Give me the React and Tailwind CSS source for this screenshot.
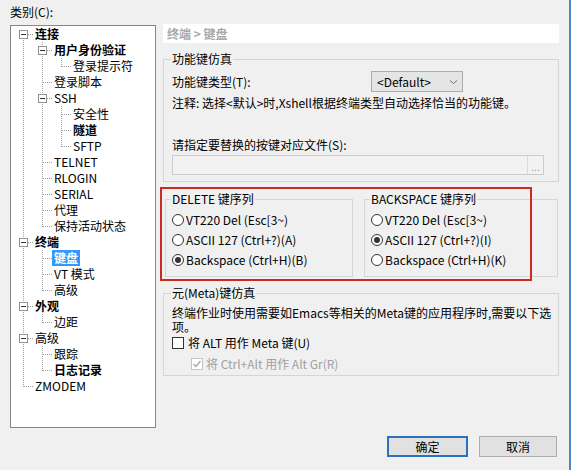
import React from 'react'

// tree rows: [label, level, bold, expander]
const TREE = [
  ['连接', 0, true, true],
  ['用户身份验证', 1, true, true],
  ['登录提示符', 2, false, false],
  ['登录脚本', 1, false, false],
  ['SSH', 1, false, true],
  ['安全性', 2, false, false],
  ['隧道', 2, true, false],
  ['SFTP', 2, false, false],
  ['TELNET', 1, false, false],
  ['RLOGIN', 1, false, false],
  ['SERIAL', 1, false, false],
  ['代理', 1, false, false],
  ['保持活动状态', 1, false, false],
  ['终端', 0, true, true],
  ['键盘', 1, true, false],
  ['VT 模式', 1, false, false],
  ['高级', 1, false, false],
  ['外观', 0, true, true],
  ['边距', 1, false, false],
  ['高级', 0, false, true],
  ['跟踪', 1, false, false],
  ['日志记录', 1, true, false],
  ['ZMODEM', 0, false, false],
]

const SELECTED = 14

function isLast(i) {
  const level = TREE[i][1]
  for (let j = i + 1; j < TREE.length; j++) {
    if (TREE[j][1] < level) return true
    if (TREE[j][1] === level) return false
  }
  return true
}

function ancestorAt(i, level) {
  for (let j = i - 1; j >= 0; j--) {
    if (TREE[j][1] === level) return j
  }
  return -1
}

function Guides({ index }) {
  const [, level, , expander] = TREE[index]
  const w = 19 * (level + 1)
  const lines = []
  for (let c = 0; c <= level; c++) {
    const x = 19 * c + 9.5
    if (c < level) {
      const a = ancestorAt(index, c)
      if (a >= 0 && !isLast(a)) {
        lines.push(<line key={'v' + c} x1={x} y1={0} x2={x} y2={16} />)
      }
    } else {
      const top = index === 0 ? 8 : 0
      const bottom = isLast(index) ? 8.5 : 16
      lines.push(<line key="v" x1={x} y1={top} x2={x} y2={bottom} />)
      lines.push(<line key="h" x1={19 * c + 10} y1={8.5} x2={19 * c + 19} y2={8.5} />)
    }
  }
  const ex = 19 * level
  return (
    <svg width={w} height={16} className="shrink-0" shapeRendering="crispEdges">
      <g stroke="#a0a0a0" strokeDasharray="1 1">{lines}</g>
      {expander && (
        <g>
          <rect x={ex + 5.5} y={4.5} width={8} height={8} fill="#fff" stroke="#919191" />
          <line x1={ex + 7} y1={8.5} x2={ex + 12} y2={8.5} stroke="#333" />
        </g>
      )}
    </svg>
  )
}

function Tree() {
  return (
    <div className="mt-[5px] h-[403px] w-[146px] overflow-hidden border border-[#828790] bg-white pl-[3px]">
      {TREE.map((row, i) => (
        <div key={i} className="flex h-4 items-center">
          <Guides index={i} />
          <span
            className={`whitespace-nowrap px-[2px] leading-4 ${row[2] ? 'font-bold' : ''} ${
              i === SELECTED ? 'bg-[#3399ff] text-white' : ''
            }`}
          >
            {row[0]}
          </span>
        </div>
      ))}
    </div>
  )
}

function Radio({ checked, label }) {
  return (
    <div className="flex h-5 items-center">
      <span className="mr-[2px] flex h-[12px] w-[12px] shrink-0 items-center justify-center rounded-full border border-[#333] bg-white">
        {checked && <span className="h-[6px] w-[6px] rounded-full bg-[#333]" />}
      </span>
      <span className="whitespace-nowrap leading-4">{label}</span>
    </div>
  )
}

function Group({ title, className = '', children }) {
  return (
    <fieldset className={`border border-[#d5d5d5] ${className}`}>
      <legend className="-ml-[1px] px-[1px] leading-4">{title}</legend>
      {children}
    </fieldset>
  )
}

export default function App() {
  return (
    <div className="flex h-[470px] w-[571px] border-r-2 border-[#4b86c6] bg-[#f0f0f0] text-[12px] text-black font-['Noto_Sans_CJK_SC','Liberation_Sans',sans-serif]">
      {/* category tree */}
      <div className="ml-[10px] w-[146px] shrink-0">
        <div className="mt-[4px] h-4 leading-4">类别(C):</div>
        <Tree />
      </div>

      {/* settings panel */}
      <div className="relative ml-[7px] w-[396px] pt-[24px]">
        <div className="h-[19px] bg-white pl-[4px] font-bold leading-[19px] text-[#a8a8a8]">终端 &gt; 键盘</div>

        <Group title="功能键仿真" className="mt-[8px] pb-[6px] pl-[8px]">
          <div className="mt-[4px] flex h-[21px] items-center">
            <span className="w-[199px] leading-4">功能键类型(T):</span>
            <div className="flex h-[21px] w-[92px] items-center justify-between border border-[#acacac] bg-[#e5e5e5] pl-[5px] pr-[4px]">
              <span className="leading-4">&lt;Default&gt;</span>
              <svg width="9" height="6" viewBox="0 0 9 6">
                <path d="M1 1.5 L4.5 4.5 L8 1.5" fill="none" stroke="#707070" strokeWidth="1" />
              </svg>
            </div>
          </div>
          <div className="mt-[3px] whitespace-nowrap leading-4">注释: 选择&lt;默认&gt;时,Xshell根据终端类型自动选择恰当的功能键。</div>
          <div className="mt-[26px] leading-4">请指定要替换的按键对应文件(S):</div>
          <div className="mt-[2px] flex h-[20px] w-[372px] justify-end border border-[#cccccc] bg-[#f2f2f2]">
            <div className="flex w-[16px] items-end justify-center border-l border-[#dcdcdc] pb-[2px] text-[10px] leading-none text-[#9a9a9a]">
              ...
            </div>
          </div>
        </Group>

        <div className="mt-[9px] flex">
          <Group title="DELETE 键序列" className="ml-[2px] w-[188px] pb-[6px] pl-[6px]">
            <div className="mt-[3px]">
              <Radio label="VT220 Del (Esc[3~)" />
              <Radio label="ASCII 127 (Ctrl+?)(A)" />
              <Radio checked label="Backspace (Ctrl+H)(B)" />
            </div>
          </Group>
          <Group title="BACKSPACE 键序列" className="ml-[11px] w-[194px] pb-[6px] pl-[6px]">
            <div className="mt-[3px]">
              <Radio label="VT220 Del (Esc[3~)" />
              <Radio checked label="ASCII 127 (Ctrl+?)(I)" />
              <Radio label="Backspace (Ctrl+H)(K)" />
            </div>
          </Group>
        </div>

        <Group title="元(Meta)键仿真" className="mt-[8px] pb-[3px] pl-[8px]">
          <div className="mt-[5px] leading-[14px]">
            终端作业时使用需要如Emacs等相关的Meta键的应用程序时,需要以下选
            <br />
            项。
          </div>
          <div className="mt-[1px] flex h-4 items-center">
            <span className="mr-[4px] h-[12px] w-[12px] shrink-0 border border-[#333] bg-white" />
            <span className="leading-4">将 ALT 用作 Meta 键(U)</span>
          </div>
          <div className="mt-[5px] flex h-4 items-center pl-[19px] text-[#a0a0a0]">
            <span className="mr-[3px] flex h-[12px] w-[12px] shrink-0 items-center justify-center border border-[#c4c4c4] bg-white">
              <svg width="10" height="10" viewBox="0 0 10 10">
                <path d="M1.5 5 L4 7.5 L8.5 2" fill="none" stroke="#a6a6a6" strokeWidth="1.3" />
              </svg>
            </span>
            <span className="leading-4">将 Ctrl+Alt 用作 Alt Gr(R)</span>
          </div>
        </Group>

        <div className="mt-[60px] flex justify-end gap-[11px] pr-[2px]">
          <button className="h-[21px] w-[81px] border-2 border-[#2a72c0] bg-[#e1e1e1] leading-4">确定</button>
          <button className="h-[21px] w-[78px] border border-[#adadad] bg-[#e1e1e1] leading-4">取消</button>
        </div>

        {/* red annotation box */}
        <div className="absolute left-[-3px] top-[187px] h-[94px] w-[372px] border-2 border-[#cc2a22]" />
      </div>
    </div>
  )
}
